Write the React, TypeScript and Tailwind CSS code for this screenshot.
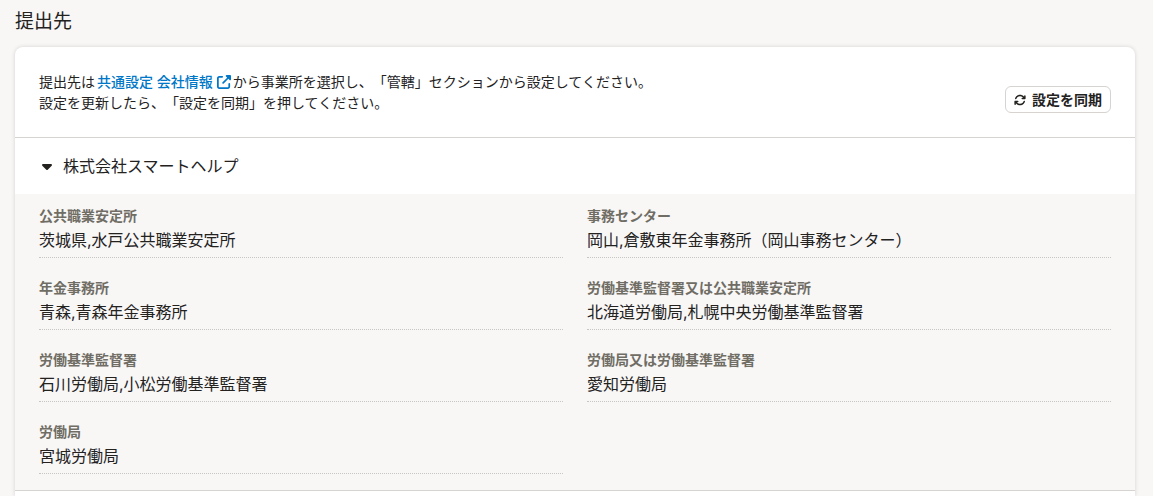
import { FaArrowsRotate, FaCaretDown, FaUpRightFromSquare } from "react-icons/fa6";

const offices = [
  { label: "公共職業安定所", value: "茨城県,水戸公共職業安定所" },
  { label: "事務センター", value: "岡山,倉敷東年金事務所（岡山事務センター）" },
  { label: "年金事務所", value: "青森,青森年金事務所" },
  { label: "労働基準監督署又は公共職業安定所", value: "北海道労働局,札幌中央労働基準監督署" },
  { label: "労働基準監督署", value: "石川労働局,小松労働基準監督署" },
  { label: "労働局又は労働基準監督署", value: "愛知労働局" },
  { label: "労働局", value: "宮城労働局" },
];

function OfficeItem({ label, value }: { label: string; value: string }) {
  return (
    <div className="border-b border-dotted border-[#c9c6c2] pb-[5px]">
      <dt className="text-sm leading-3 font-bold text-[#706d65]">{label}</dt>
      <dd className="mt-1.5 text-base leading-6">{value}</dd>
    </div>
  );
}

export default function App() {
  return (
    <div className="flex min-h-screen flex-col bg-[#f8f7f6] pr-[18px] pl-[15px] font-['Inter','Noto_Sans_CJK_JP',sans-serif] text-[#23221e] [text-spacing-trim:space-all]">
      <h2 className="pt-2 pb-3 text-[19px] leading-[27px]">提出先</h2>

      <section className="flex-1 rounded-t-lg bg-white shadow-[0_0_4px_rgba(3,3,2,0.15)]">
        <div className="flex items-end justify-between px-6 pt-6 pb-6">
          <p className="text-sm leading-[21px]">
            提出先は
            <a href="#company" className="mx-0.5 inline-flex items-center gap-1 font-medium text-[#0077c7]">
              共通設定 会社情報
              <FaUpRightFromSquare />
            </a>
            から事業所を選択し、「管轄」セクションから設定してください。
            <br />
            設定を更新したら、「設定を同期」を押してください。
          </p>
          <button
            type="button"
            className="flex h-[27px] shrink-0 items-center gap-1.5 rounded-md border border-[#d6d3d0] bg-white px-2 text-sm leading-none font-bold"
          >
            <FaArrowsRotate className="size-3" />
            設定を同期
          </button>
        </div>

        <h3 className="border-t border-[#d6d3d0]">
          <button
            type="button"
            aria-expanded="true"
            aria-controls="office-panel"
            className="flex h-14 w-full items-center gap-2 px-6 text-base"
          >
            <FaCaretDown className="size-4" />
            株式会社スマートヘルプ
          </button>
        </h3>

        <dl
          id="office-panel"
          className="grid grid-cols-2 gap-6 border-b border-[#d6d3d0] bg-[#f8f7f6] px-6 py-4"
        >
          {offices.map((office) => (
            <OfficeItem key={office.label} label={office.label} value={office.value} />
          ))}
        </dl>
      </section>
    </div>
  );
}
